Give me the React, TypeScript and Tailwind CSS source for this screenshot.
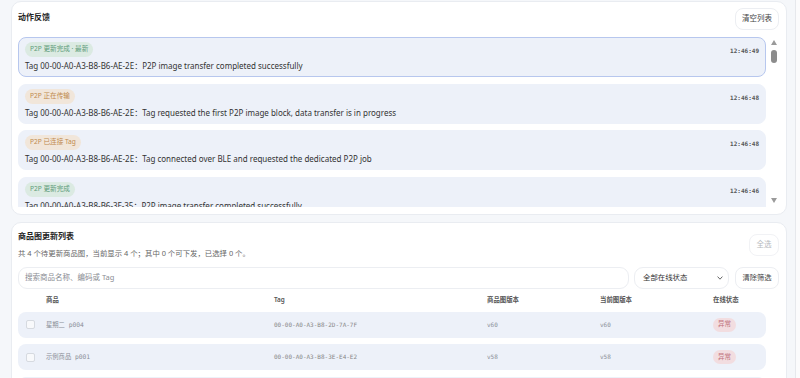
import React from "react";

const FONT = { fontFamily: '"Noto Sans", "Noto Sans CJK SC", sans-serif' };
const MONO = { fontFamily: '"DejaVu Sans Mono", "Liberation Mono", "Noto Sans CJK SC", monospace' };

type Log = { tag: string; tone: "green" | "orange"; time: string; msg: string; active?: boolean };

const logs: Log[] = [
  { tag: "P2P 更新完成 · 最新", tone: "green", time: "12:46:49", msg: "Tag 00-00-A0-A3-B8-B6-AE-2E：P2P image transfer completed successfully", active: true },
  { tag: "P2P 正在传输", tone: "orange", time: "12:46:48", msg: "Tag 00-00-A0-A3-B8-B6-AE-2E：Tag requested the first P2P image block, data transfer is in progress" },
  { tag: "P2P 已连接 Tag", tone: "orange", time: "12:46:48", msg: "Tag 00-00-A0-A3-B8-B6-AE-2E：Tag connected over BLE and requested the dedicated P2P job" },
  { tag: "P2P 更新完成", tone: "green", time: "12:46:46", msg: "Tag 00-00-A0-A3-B8-B6-3F-35：P2P image transfer completed successfully" },
];

const rows = [
  { name: "星期二 p004", tag: "00-00-A0-A3-B8-2D-7A-7F", v1: "v60", v2: "v60" },
  { name: "示例商品 p001", tag: "00-00-A0-A3-B8-3E-E4-E2", v1: "v58", v2: "v58" },
  { name: "示例商品 p002", tag: "00-00-A0-A3-B8-B6-AE-2E", v1: "v57", v2: "v57" },
];

function Pill({ text, tone }: { text: string; tone: "green" | "orange" }) {
  const cls =
    tone === "green"
      ? "bg-[#dbeae2] text-[#5e9c7a]"
      : "bg-[#f1e6da] text-[#c08a4e]";
  return (
    <span className={`inline-flex h-[15px] items-center rounded-full px-[5px] text-[6.6px] leading-none ${cls}`}>
      {text}
    </span>
  );
}

export default function App() {
  return (
    <div className="flex h-[378px] w-[800px] overflow-hidden bg-[#f5f7fa] leading-none" style={FONT}>
      <div className="flex flex-1 flex-col gap-[7px] pl-[11px] pr-[8px] pt-[1px]">
        {/* Card 1 */}
        <div className="flex flex-col rounded-[10px] border border-[#e9ecf1] bg-white px-[6px] pb-[7px] pt-[6px] pr-[7px]">
          <div className="flex items-start justify-between">
            <div className="mt-[3px] text-[8px] font-bold leading-[12px] text-[#222]">动作反馈</div>
            <button className="h-[22px] w-[44px] rounded-[8px] border border-[#eceef2] bg-white text-[7.5px] leading-none text-[#444]">
              清空列表
            </button>
          </div>
          <div className="mt-[7px] flex h-[170px] gap-[3px]">
            <div className="flex flex-1 flex-col gap-[6.5px] overflow-hidden">
              {logs.map((l, i) => (
                <div
                  key={i}
                  className={`flex h-[40px] shrink-0 justify-between rounded-[8px] border bg-[#edf1f9] px-[6px] pb-[4px] pt-[4px] ${
                    l.active ? "border-[#b7c7ee]" : "border-[#edf1f9]"
                  }`}
                >
                  <div className="flex flex-col items-start">
                    <Pill text={l.tag} tone={l.tone} />
                    <div className="mt-[3px] whitespace-nowrap text-[8px] leading-[12px] text-[#333]">{l.msg}</div>
                  </div>
                  <div className="pt-[5px] text-[6px] font-semibold leading-[8px] text-[#555]" style={MONO}>
                    {l.time}
                  </div>
                </div>
              ))}
            </div>
            <div className="flex w-[10px] flex-col items-center pb-[4px] pt-[3px]">
              <svg width="6" height="5" viewBox="0 0 6 5">
                <path d="M3 0 L6 5 L0 5 Z" fill="#9a9a9a" />
              </svg>
              <div className="mt-[5px] h-[13px] w-[6px] rounded-full bg-[#8c8c8c]" />
              <div className="flex-1" />
              <svg width="6" height="5" viewBox="0 0 6 5">
                <path d="M0 0 L6 0 L3 5 Z" fill="#9a9a9a" />
              </svg>
            </div>
          </div>
        </div>

        {/* Card 2 */}
        <div className="flex flex-1 flex-col rounded-[10px] border border-[#e9ecf1] bg-white pl-[6px] pr-[7px] pt-[7px]">
          <div className="flex items-center justify-between">
            <div className="flex flex-col">
              <div className="text-[8px] font-bold leading-[12px] text-[#222]">商品图更新列表</div>
              <div className="mt-[5px] text-[7.4px] leading-[12px] text-[#666]">
                共 4 个待更新商品图，当前显示 4 个；其中 0 个可下发，已选择 0 个。
              </div>
            </div>
            <button className="h-[22px] w-[30px] rounded-[8px] border border-[#f1f2f5] bg-white text-[7.5px] leading-none text-[#b5b8bd]">
              全选
            </button>
          </div>
          <div className="mt-[7.5px] flex h-[22px] gap-[5px]">
            <div className="flex flex-1 items-center rounded-[9px] border border-[#eceef2] bg-white px-[6px] text-[7.5px] text-[#8a8d93]">
              搜索商品名称、编码或 Tag
            </div>
            <div className="flex w-[95px] items-center justify-between rounded-[9px] border border-[#eceef2] bg-white pl-[8px] pr-[5px] text-[7.4px] text-[#333]">
              <span>全部在线状态</span>
              <svg width="6" height="4" viewBox="0 0 6 4">
                <path d="M0.6 0.6 L3 3.2 L5.4 0.6" fill="none" stroke="#555" strokeWidth="0.9" />
              </svg>
            </div>
            <button className="ml-[1px] h-[22px] w-[44px] rounded-[8px] border border-[#eceef2] bg-white text-[7.3px] leading-none text-[#444]">
              清除筛选
            </button>
          </div>
          <div className="pr-[13px]">
            <div className="mt-[5.5px] grid h-[12px] grid-cols-[28px_228px_213px_113px_113px_1fr] items-center text-[6.4px] font-semibold text-[#555]">
              <span />
              <span>商品</span>
              <span>Tag</span>
              <span>商品图版本</span>
              <span>当前图版本</span>
              <span>在线状态</span>
            </div>
            <div className="mt-[5.7px] flex flex-col gap-[6.5px]">
              {rows.map((r, i) => (
                <div
                  key={i}
                  className="grid h-[26px] shrink-0 grid-cols-[28px_228px_213px_113px_113px_1fr] items-center rounded-[8px] bg-[#edf1f9] text-[6.3px] text-[#8a8f98]"
                >
                  <span className="pl-[7.7px]">
                    <span className="block h-[9px] w-[9px] rounded-[2px] border border-[#d6dae0] bg-[#f8f9fb]" />
                  </span>
                  <span style={MONO}>{r.name}</span>
                  <span className="text-[6px] text-[#888]" style={MONO}>{r.tag}</span>
                  <span className="text-[6px]" style={MONO}>{r.v1}</span>
                  <span className="text-[6px]" style={MONO}>{r.v2}</span>
                  <span className="flex">
                    <span className="inline-flex h-[14px] w-[23px] items-center justify-center rounded-full bg-[#f2dde0] text-[6.5px] text-[#c0717b]">
                      异常
                    </span>
                  </span>
                </div>
              ))}
            </div>
          </div>
        </div>
      </div>
      <div className="w-[5px] border-l border-[#e6e8ec] bg-[#fbfbfc]" />
    </div>
  );
}
